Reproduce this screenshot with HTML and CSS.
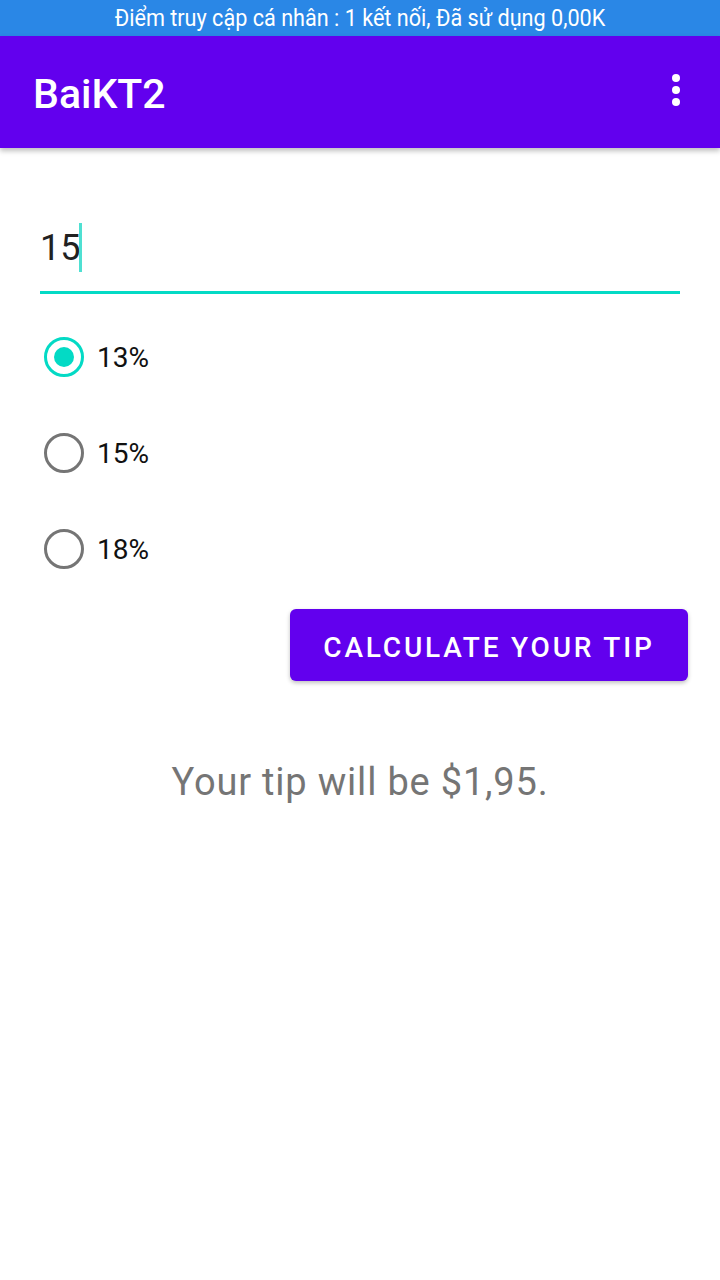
FILE: index.html
```html
<!DOCTYPE html>
<html lang="vi">
<head>
<meta charset="utf-8">
<title>BaiKT2</title>
<link rel="stylesheet" href="styles.css">
</head>
<body>
<div class="status-bar"><span class="status-text">Điểm truy cập cá nhân : 1 kết nối, Đã sử dụng 0,00K</span></div>
<header class="app-bar">
  <h1 class="app-title">BaiKT2</h1>
  <div class="overflow" aria-label="More options">
    <svg width="8" height="32" viewBox="0 0 8 32"><circle cx="4" cy="4" r="4" fill="#fff"/><circle cx="4" cy="16" r="4" fill="#fff"/><circle cx="4" cy="28" r="4" fill="#fff"/></svg>
  </div>
</header>
<main class="content">
  <div class="form">
    <div class="field"><span class="field-text">15</span><span class="cursor"></span></div>
    <div class="radio-group">
      <label class="radio-row"><span class="radio checked"><span class="dot"></span></span><span class="radio-label">13%</span></label>
      <label class="radio-row"><span class="radio"></span><span class="radio-label">15%</span></label>
      <label class="radio-row"><span class="radio"></span><span class="radio-label">18%</span></label>
    </div>
  </div>
  <div class="button-row"><button class="calc-btn">CALCULATE YOUR TIP</button></div>
  <p class="result">Your tip will be $1,95.</p>
</main>
</body>
</html>
```
FILE: styles.css
```css
* { box-sizing: border-box; }
html, body { margin: 0; padding: 0; background: #fff; }
body { font-family: Roboto, "Noto Sans", "Liberation Sans", sans-serif; width: 720px; height: 1280px; overflow: hidden; }

.status-bar {
  height: 36px;
  background: #2a87e6;
  color: #fff;
  display: flex;
  justify-content: center;
  align-items: center;
  overflow: hidden;
}
.status-text {
  display: inline-block;
  font-size: 23px;
  line-height: 36px;
  white-space: nowrap;
  transform: scaleX(0.94);
  padding-top: 2px;
}

.app-bar {
  height: 112px;
  background: #6200ee;
  display: flex;
  align-items: center;
  justify-content: space-between;
  padding: 4px 40px 0 33px;
  box-shadow: 0 3px 5px rgba(0,0,0,0.25);
  position: relative;
  z-index: 1;
}
.app-title {
  margin: 0;
  color: #fff;
  font-size: 41px;
  font-weight: 500;
  line-height: 48px;
}
.overflow { display: flex; margin-top: -8px; }

.form { padding: 0 40px; }
.field {
  margin-top: 76px;
  padding-bottom: 19px;
  border-bottom: 3px solid #03dac5;
  display: flex;
  align-items: center;
  height: 70px;
}
.field-text {
  font-size: 36px;
  line-height: 48px;
  color: #212121;
}
.cursor {
  width: 3px;
  height: 49px;
  background: #4fe0d2;
  margin-left: -1px;
  margin-top: -2px;
}

.radio-group { margin-top: 15px; display: flex; flex-direction: column; }
.radio-row {
  height: 96px;
  display: flex;
  align-items: center;
  padding-left: 4px;
}
.radio {
  width: 40px;
  height: 40px;
  border-radius: 50%;
  border: 3.5px solid #757575;
  display: flex;
  align-items: center;
  justify-content: center;
}
.radio.checked { border-color: #03dac5; }
.dot { width: 20px; height: 20px; border-radius: 50%; background: #03dac5; }
.radio-label {
  margin-left: 13px;
  font-size: 28px;
  color: #111;
  line-height: 32px;
  padding-top: 2px;
}

.button-row {
  display: flex;
  justify-content: flex-end;
  padding-right: 32px;
  margin-top: 12px;
}
.calc-btn {
  height: 72px;
  width: 398px;
  border: none;
  border-radius: 6px;
  background: #6200ee;
  color: #fff;
  font-family: Roboto, "Noto Sans", sans-serif;
  font-size: 28px;
  font-weight: 500;
  letter-spacing: 2.8px;
  box-shadow: 0 2px 4px rgba(0,0,0,0.25);
  padding: 4px 0 0;
}

.result {
  margin: 77px 0 0;
  text-align: center;
  font-size: 38px;
  letter-spacing: 0.8px;
  line-height: 48px;
  color: #757575;
}
```
